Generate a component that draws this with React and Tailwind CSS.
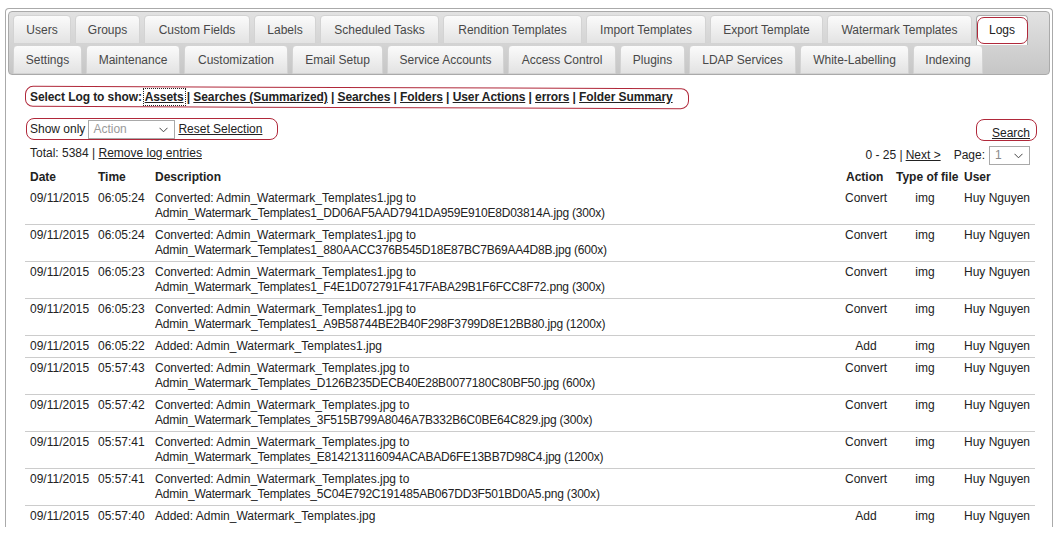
import React from "react";

const row1 = [["Users",58],["Groups",65],["Custom Fields",106],["Labels",62],["Scheduled Tasks",119],["Rendition Templates",139],["Import Templates",120],["Export Template",113],["Watermark Templates",145],["Logs",52]];
const row2 = [["Settings",69],["Maintenance",94],["Customization",104],["Email Setup",91],["Service Accounts",117],["Access Control",108],["Plugins",65],["LDAP Services",107],["White-Labelling",109],["Indexing",70]];

const rows = [
  ["09/11/2015","06:05:24","Converted: Admin_Watermark_Templates1.jpg to","Admin_Watermark_Templates1_DD06AF5AAD7941DA959E910E8D03814A.jpg (300x)","Convert"],
  ["09/11/2015","06:05:24","Converted: Admin_Watermark_Templates1.jpg to","Admin_Watermark_Templates1_880AACC376B545D18E87BC7B69AA4D8B.jpg (600x)","Convert"],
  ["09/11/2015","06:05:23","Converted: Admin_Watermark_Templates1.jpg to","Admin_Watermark_Templates1_F4E1D072791F417FABA29B1F6FCC8F72.png (300x)","Convert"],
  ["09/11/2015","06:05:23","Converted: Admin_Watermark_Templates1.jpg to","Admin_Watermark_Templates1_A9B58744BE2B40F298F3799D8E12BB80.jpg (1200x)","Convert"],
  ["09/11/2015","06:05:22","Added: Admin_Watermark_Templates1.jpg",null,"Add"],
  ["09/11/2015","05:57:43","Converted: Admin_Watermark_Templates.jpg to","Admin_Watermark_Templates_D126B235DECB40E28B0077180C80BF50.jpg (600x)","Convert"],
  ["09/11/2015","05:57:42","Converted: Admin_Watermark_Templates.jpg to","Admin_Watermark_Templates_3F515B799A8046A7B332B6C0BE64C829.jpg (300x)","Convert"],
  ["09/11/2015","05:57:41","Converted: Admin_Watermark_Templates.jpg to","Admin_Watermark_Templates_E814213116094ACABAD6FE13BB7D98C4.jpg (1200x)","Convert"],
  ["09/11/2015","05:57:41","Converted: Admin_Watermark_Templates.jpg to","Admin_Watermark_Templates_5C04E792C191485AB067DD3F501BD0A5.png (300x)","Convert"],
  ["09/11/2015","05:57:40","Added: Admin_Watermark_Templates.jpg",null,"Add"],
];

function Tab({ label, width, active }) {
  if (active) {
    return (
      <div style={{ width }} className="relative shrink-0 h-[30px] -mb-px pt-[7px] text-center border border-[#aaaaaa] border-b-0 rounded-t-[4px] bg-white text-[#212121] whitespace-nowrap">
        {label}
        <div className="absolute left-0 right-[-1px] top-[1px] bottom-[1px] border border-[#b0283a] rounded-[7px]" />
      </div>
    );
  }
  return (
    <div style={{ width }} className="shrink-0 h-[29px] pt-[7px] text-center border border-[#d3d3d3] rounded-t-[4px] bg-gradient-to-b from-[#fbfbfb] to-[#e3e3e3] text-[#484848] whitespace-nowrap">
      {label}
    </div>
  );
}

function Chevron() {
  return (
    <svg width="9" height="6" viewBox="0 0 9 6" className="block">
      <polyline points="0.5,0.8 4.5,4.8 8.5,0.8" fill="none" stroke="#444" strokeWidth="1" />
    </svg>
  );
}

export default function App() {
  return (
    <div className="w-[1062px] h-[545px] bg-white overflow-hidden font-['Liberation_Sans',Arial,sans-serif] text-[12px] leading-[15px] text-[#222]">
      <div className="ml-[5px] mt-[8px] w-[1048px] h-[519px] border border-b-0 border-[#aaaaaa] rounded-t-[4px] p-[2px] overflow-hidden">
        {/* tab header */}
        <div className="h-[64px] border border-[#aaaaaa] rounded-[4px] bg-gradient-to-b from-[#e2e2e2] to-[#c6c6c6] pl-[4px] pt-[3px]">
          <div className="flex gap-x-[4px]">
            {row1.map(([t, w]) => <Tab key={t} label={t} width={w} active={t === "Logs"} />)}
          </div>
          <div className="flex gap-x-[4px] mt-px">
            {row2.map(([t, w]) => <Tab key={t} label={t} width={w} />)}
          </div>
        </div>

        {/* panel */}
        <div className="ml-[17px] w-[1010px] pt-[15px]">
          {/* select log */}
          <div className="relative pl-[5px] h-[15px] font-bold tracking-[-0.08px]">
            Select Log to show:{" "}
            <span className="underline outline-1 outline-dotted outline-[#222] outline-offset-[1px]">Assets</span>
            {" | "}<span className="underline">Searches (Summarized)</span>
            {" | "}<span className="underline">Searches</span>
            {" | "}<span className="underline">Folders</span>
            {" | "}<span className="underline">User Actions</span>
            {" | "}<span className="underline">errors</span>
            {" | "}<span className="underline">Folder Summary</span>
            <div className="absolute left-0 top-[-3px] w-[664px] h-[21px] border border-[#b0283a] rounded-[8px] -skew-x-[0.5deg] rotate-[0.2deg]" />
          </div>

          {/* show only + search */}
          <div className="flex justify-between mt-[15px] h-[20px]">
            <div className="relative flex items-center pl-[5px] pr-[12px] -mt-px">
              <span>Show only</span>
              <div className="ml-[3px] w-[87px] h-[19px] border border-[#a9a9a9] flex items-center justify-between pl-[4px] pr-[6px] text-[#9a9a9a]">
                <span>Action</span>
                <Chevron />
              </div>
              <span className="ml-[3px] underline">Reset Selection</span>
              <div className="absolute left-[1px] top-[-1px] w-[252px] h-[22px] border border-[#b0283a] rounded-[8px]" />
            </div>
            <div className="relative pr-[5px] pt-[6px]">
              <span className="underline">Search</span>
              <div className="absolute left-[-16px] top-[-1px] w-[61px] h-[22px] border border-[#b0283a] rounded-[8px]" />
            </div>
          </div>

          {/* total + pagination */}
          <div className="flex justify-between mt-[6px] pl-[5px] pr-[5px]">
            <div>
              Total: 5384 | <span className="underline">Remove log entries</span>
            </div>
            <div className="flex items-center">
              <span>0 - 25 | </span>
              <span className="underline ml-[3px]">Next &gt;</span>
              <span className="ml-[13px]">Page:</span>
              <div className="ml-[4px] w-[41px] h-[19px] border border-[#a9a9a9] flex items-center justify-between pl-[5px] pr-[6px] text-[#8a8a8a]">
                <span>1</span>
                <Chevron />
              </div>
            </div>
          </div>

          {/* table */}
          <table className="mt-[2px] w-[1010px] border-collapse table-fixed">
            <colgroup>
              <col className="w-[68px]" />
              <col className="w-[57px]" />
              <col className="w-[691px]" />
              <col className="w-[50px]" />
              <col className="w-[68px]" />
              <col />
            </colgroup>
            <thead>
              <tr className="font-bold text-left">
                <th className="pl-[5px] pt-[3px] pb-[3px] font-bold">Date</th>
                <th className="pl-[5px] pt-[3px] pb-[3px] font-bold">Time</th>
                <th className="pl-[5px] pt-[3px] pb-[3px] font-bold">Description</th>
                <th className="pl-[5px] pt-[3px] pb-[3px] font-bold">Action</th>
                <th className="pl-[5px] pt-[3px] pb-[3px] font-bold whitespace-nowrap">Type of file</th>
                <th className="pl-[5px] pt-[3px] pb-[3px] font-bold">User</th>
              </tr>
            </thead>
            <tbody>
              {rows.map((r, i) => (
                <tr key={i} className="border-b border-[#cccccc] align-top text-[#222]">
                  <td className="pl-[5px] pt-[3px] pb-[3px]">{r[0]}</td>
                  <td className="pl-[5px] pt-[3px] pb-[3px]">{r[1]}</td>
                  <td className="pl-[5px] pt-[3px] pb-[3px] whitespace-nowrap">
                    {r[2]}
                    {r[3] && <><br /><span className="tracking-[-0.2px]">{r[3]}</span></>}
                  </td>
                  <td className="pt-[3px] pb-[3px] text-center">{r[4]}</td>
                  <td className="pt-[3px] pb-[3px] text-center">img</td>
                  <td className="pl-[5px] pt-[3px] pb-[3px] whitespace-nowrap">Huy Nguyen</td>
                </tr>
              ))}
            </tbody>
          </table>
        </div>
      </div>
    </div>
  );
}
